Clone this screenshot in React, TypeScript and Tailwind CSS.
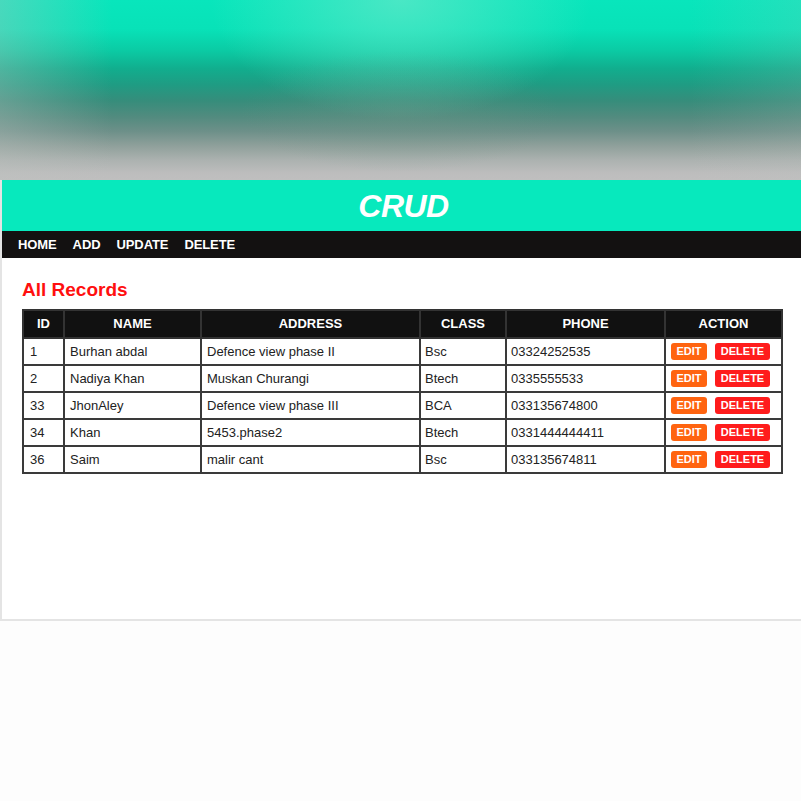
import React from 'react';

const records = [
  { id: 1, name: 'Burhan abdal', address: 'Defence view phase II', cls: 'Bsc', phone: '03324252535' },
  { id: 2, name: 'Nadiya Khan', address: 'Muskan Churangi', cls: 'Btech', phone: '0335555533' },
  { id: 33, name: 'JhonAley', address: 'Defence view phase III', cls: 'BCA', phone: '033135674800' },
  { id: 34, name: 'Khan', address: '5453.phase2', cls: 'Btech', phone: '0331444444411' },
  { id: 36, name: 'Saim', address: 'malir cant', cls: 'Bsc', phone: '033135674811' },
];

const headers = ['ID', 'NAME', 'ADDRESS', 'CLASS', 'PHONE', 'ACTION'];

// blurred backdrop above the page panel
const BlurredBanner = () => (
  <div className="relative h-[180px] w-full overflow-hidden bg-[linear-gradient(to_bottom,#08e6bc_0%,#08e2b8_16%,#0bcba4_28%,#11ae8e_38%,#1f9c83_47%,#368d7b_56%,#528b7f_65%,#6d9089_73%,#8fa09b_81%,#acb2b0_89%,#bdbdbd_96%,#bfbfbf_100%)]">
    <div className="absolute inset-0 bg-[radial-gradient(ellipse_190px_120px_at_50%_0%,rgba(95,232,200,0.75),rgba(95,232,200,0)_100%)]" />
    <div className="absolute inset-0 bg-[radial-gradient(ellipse_160px_60px_at_50%_62%,rgba(110,150,135,0.35),rgba(110,150,135,0)_100%)]" />
    <div className="absolute inset-0 bg-[linear-gradient(to_right,rgba(190,195,192,0.35)_0%,rgba(190,195,192,0)_14%,rgba(0,0,0,0)_86%,rgba(190,195,192,0.15)_100%)]" />
  </div>
);

const App = () => {
  return (
    <div className="min-h-[801px] w-[801px] bg-[#fdfdfd] font-['Liberation_Sans',Arial,sans-serif]">
      <BlurredBanner />
      <div className="h-[441px] border-b-2 border-l-2 border-[#e4e4e4] bg-white">
        <div className="flex h-[51px] items-center justify-center bg-[#07e9bd]">
          <h1 className="pl-[4px] text-[32px] font-bold italic leading-none tracking-[-0.5px] text-white">CRUD</h1>
        </div>
        <nav className="flex h-[27px] items-center gap-4 bg-[#131111] pl-4 text-[13px] font-bold tracking-[-0.1px] text-white">
          <span>HOME</span>
          <span>ADD</span>
          <span>UPDATE</span>
          <span>DELETE</span>
        </nav>
        <div className="px-5 pt-[20px]">
          <h2 className="text-[19px] font-bold leading-[24px] text-[#ff0f0f]">All Records</h2>
          <table className="mt-[7px] w-[759px] table-fixed border-collapse border-2 border-[#3a3a3a] text-[13px]">
            <colgroup>
              <col className="w-[41px]" />
              <col className="w-[137px]" />
              <col className="w-[219px]" />
              <col className="w-[86px]" />
              <col className="w-[159px]" />
              <col className="w-[117px]" />
            </colgroup>
            <thead>
              <tr className="h-[28px] bg-[#111111]">
                {headers.map((h) => (
                  <th key={h} className="border-2 border-[#333333] text-center font-bold text-white">
                    {h}
                  </th>
                ))}
              </tr>
            </thead>
            <tbody>
              {records.map((r) => (
                <tr key={r.id} className="h-[27px] text-[#222222]">
                  <td className="border-2 border-[#3a3a3a] pl-[6px]">{r.id}</td>
                  <td className="border-2 border-[#3a3a3a] pl-[5px]">{r.name}</td>
                  <td className="border-2 border-[#3a3a3a] pl-[5px]">{r.address}</td>
                  <td className="border-2 border-[#3a3a3a] pl-[4px]">{r.cls}</td>
                  <td className="border-2 border-[#3a3a3a] pl-[4px]">{r.phone}</td>
                  <td className="border-2 border-[#3a3a3a] pl-[5px]">
                    <div className="flex items-center gap-2">
                      <button className="flex h-[17px] w-[36px] items-center justify-center rounded-[3px] bg-[#ff6410] text-[11px] font-bold text-white">
                        EDIT
                      </button>
                      <button className="flex h-[17px] w-[55px] items-center justify-center rounded-[3px] bg-[#ff1c1c] text-[11px] font-bold text-white">
                        DELETE
                      </button>
                    </div>
                  </td>
                </tr>
              ))}
            </tbody>
          </table>
        </div>
      </div>
    </div>
  );
};

export default App;
